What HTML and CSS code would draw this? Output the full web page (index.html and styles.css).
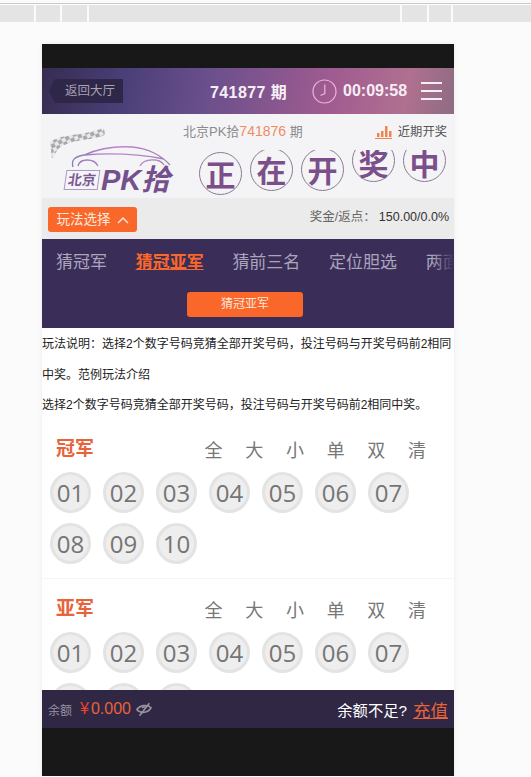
FILE: index.html
```html
<!DOCTYPE html>
<html lang="zh">
<head>
<meta charset="utf-8">
<title>北京PK拾</title>
<link rel="stylesheet" href="styles.css">
</head>
<body>
<div class="ruler">
  <i class="tick t1"></i><i class="tick t2"></i><i class="tick t3"></i><i class="tick t4"></i><i class="tick t5"></i><i class="tick t6"></i>
</div>
<div class="phone">
  <div class="black top"></div>
  <header class="head">
    <div class="back"><span>返回大厅</span></div>
    <div class="issue">741877 期</div>
    <svg class="clock" width="25" height="25" viewBox="0 0 25 25"><circle cx="12.5" cy="12.5" r="11.5" fill="none" stroke="#eeb4dc" stroke-width="1.2"/><path d="M12.8 5.500V14.500L8.500 16.500" fill="none" stroke="#eeb4dc" stroke-width="1.2"/></svg>
    <div class="time">00:09:58</div>
    <div class="menu"><i></i><i></i><i></i></div>
  </header>
  <section class="info">
    <div class="logo">
      <svg class="flag" width="56" height="33" viewBox="0 0 56 33"><defs><pattern id="chk" width="8" height="8" patternUnits="userSpaceOnUse" patternTransform="rotate(-28)"><rect width="8" height="8" fill="#e6e6e6"/><rect width="4" height="4" fill="#9c9c9c"/><rect x="4" y="4" width="4" height="4" fill="#9c9c9c"/></pattern></defs><path d="M0 15C14 6 28 10 54 1L55 8C40 14 20 12 8 22L2 32Z" fill="url(#chk)"/></svg>
      <svg class="car" width="104" height="24" viewBox="0 0 104 24"><defs><linearGradient id="carg" x1="0" x2="1"><stop offset="0" stop-color="#8f78b8"/><stop offset=".5" stop-color="#c084d0"/><stop offset="1" stop-color="#9a82b4"/></linearGradient></defs><path d="M5 21C3 14 6 11 16 9C30 3 48 0 64 1C80 2 94 10 102 19M16 9C40 7 70 8 96 13M10 20C12 12 26 12 30 20M72 20C76 12 92 12 96 19" fill="none" stroke="url(#carg)" stroke-width="1.300"/></svg>
      <div class="brand"><span class="bj">北京</span><span class="pk">PK拾</span></div>
    </div>
    <div class="draw">
      <div class="draw-top">
        <div class="lot">北京PK拾<em>741876</em> 期</div>
        <div class="recent">
          <svg width="17" height="14" viewBox="0 0 17 14"><path d="M2 8h2.500v4H2zM6 6h2.500v6H6zM10 1h2.500v11H10zM14 6h2.500v6H14z" fill="#f0844c"/><path d="M0 13h17v1H0z" fill="#f0844c"/></svg>
          <span>近期开奖</span>
        </div>
      </div>
      <div class="chars">
        <span class="ch">正</span><span class="ch c2">在</span><span class="ch c2">开</span><span class="ch c3">奖</span><span class="ch c3">中</span>
      </div>
    </div>
  </section>
  <section class="playbar">
    <button class="playbtn">玩法选择<svg width="12" height="8" viewBox="0 0 12 8"><path d="M1 7L6 2L11 7" fill="none" stroke="#ffe3d5" stroke-width="1.500"/></svg></button>
    <div class="odds">奖金/返点：<b>150.00/0.0%</b></div>
  </section>
  <nav class="tabs">
    <div class="tabrow">
      <span>猜冠军</span><span class="on">猜冠亚军</span><span>猜前三名</span><span>定位胆选</span><span>两面</span>
    </div>
    <div class="subtab">猜冠亚军</div>
  </nav>
  <main class="content">
    <p class="desc d1">玩法说明：选择2个数字号码竞猜全部开奖号码，投注号码与开奖号码前2相同</p>
    <p class="desc d2">中奖。范例玩法介绍</p>
    <p class="desc d3">选择2个数字号码竞猜全部开奖号码，投注号码与开奖号码前2相同中奖。</p>
    <section class="pick">
      <div class="pick-head"><h3>冠军</h3><div class="opts"><span>全</span><span>大</span><span>小</span><span>单</span><span>双</span><span>清</span></div></div>
      <div class="balls"><span>01</span><span>02</span><span>03</span><span>04</span><span>05</span><span>06</span><span>07</span><span>08</span><span>09</span><span>10</span></div>
    </section>
    <section class="pick second">
      <div class="pick-head"><h3>亚军</h3><div class="opts"><span>全</span><span>大</span><span>小</span><span>单</span><span>双</span><span>清</span></div></div>
      <div class="balls"><span>01</span><span>02</span><span>03</span><span>04</span><span>05</span><span>06</span><span>07</span><span>08</span><span>09</span><span>10</span></div>
    </section>
  </main>
  <footer class="foot">
    <span class="bal">余额</span><span class="money"><i>¥</i>0.000</span>
    <svg class="eye" width="16" height="15" viewBox="0 0 18 16"><path d="M1 8C4 3 13 2 17 6C14 12 5 13 1 8Z" fill="none" stroke="#99939f" stroke-width="1.800"/><path d="M15 1L4 15M7 6.500a3 3 0 0 1 4.500-.500" fill="none" stroke="#99939f" stroke-width="1.800"/></svg>
    <span class="lack">余额不足?</span><a class="charge">充值</a>
  </footer>
  <div class="black bottom"></div>
</div>
</body>
</html>
```
FILE: styles.css
```css
* { box-sizing: border-box; }
html, body { margin: 0; padding: 0; }
body {
  width: 531px; height: 777px; overflow: hidden; background: #fbfbfb;
  font-family: "Liberation Sans", "Noto Sans CJK TC", sans-serif;
}
.ruler {
  position: relative; height: 19px;
  border-top: 1px solid #c9c9c9; margin-top: 3px; margin-bottom: 22px;
  background: linear-gradient(#fff 0 1px, #e4e4e4 1px);
}
.tick { position: absolute; top: 1px; bottom: 0; width: 2px; background: #fafafa; }
.t1 { left: 34px; } .t2 { left: 60px; } .t3 { left: 87px; }
.t4 { left: 400px; } .t5 { left: 427px; } .t6 { left: 451px; }

.phone { width: 412px; height: 733px; margin-left: 42px; background: #fff; box-shadow: 0 0 4px rgba(0,0,0,.08); }
.black { background: #181818; }
.black.top { height: 24px; }
.black.bottom { height: 48px; }

.head {
  height: 46px; display: flex; align-items: center; color: #fff;
  background: linear-gradient(100deg, #372c50 0%, #4a3f78 20%, #6a4f8c 40%, #a05c90 70%, #b07090 88%, #8d6c80 100%);
}
.back {
  width: 74px; height: 24px; margin-left: 7px; background: #2f2748; flex: none;
  clip-path: polygon(6px 0, 100% 0, 100% 100%, 6px 100%, 0 50%);
  color: #a8a3b6; font-size: 12.500px; line-height: 24px; padding-left: 16px; white-space: nowrap;
}
.issue { margin-left: 87px; font-size: 16px; font-weight: 700; letter-spacing: .4px; width: 102px; flex: none; color: #f6eef6; white-space: nowrap; }
.clock { display: block; flex: none; }
.time { margin-left: 6px; font-size: 16px; font-weight: 700; color: #f6eef6; }
.menu { margin-left: 14px; width: 21px; display: flex; flex-direction: column; gap: 6px; flex: none; }
.menu i { display: block; height: 2px; background: #f7edf5; }

.info { height: 84px; background: #f4f4f6; display: flex; }
.logo { width: 139px; position: relative; flex: none; }
.flag { position: absolute; left: 8px; top: 13px; opacity: .85; }
.car { position: absolute; left: 26px; top: 32px; }
.brand { position: absolute; left: 23px; top: 51px; display: flex; align-items: center; gap: 2px; white-space: nowrap; }
.bj { font-size: 14px; font-weight: 700; color: #7b5b93; border: 1px solid #a99bc0; padding: 1px 2px; line-height: 16px; background: #f7f4f9; transform: skewX(-8deg); }
.pk { font-size: 29px; line-height: 30px; font-weight: 700; font-style: italic; color: #74508c; }

.draw { flex: 1; display: flex; flex-direction: column; min-width: 0; }
.draw-top { display: flex; justify-content: space-between; height: 36px; padding: 9px 7px 0 2px; }
.lot { font-size: 13px; line-height: 17px; color: #8b8b8b; white-space: nowrap; }
.lot em { font-style: normal; color: #ef8a64; font-size: 14px; }
.recent { display: flex; gap: 6px; align-items: flex-start; font-size: 12.300px; line-height: 19px; color: #555; white-space: nowrap; }
.recent svg { margin-top: 2px; }
.chars { display: flex; gap: 8px; padding-left: 18px; height: 48px; overflow: hidden; align-items: flex-start; }
.ch {
  width: 43px; height: 43px; border: 1px solid #8b7a96; border-radius: 50%; flex: none;
  font-size: 30px; line-height: 40px; text-align: center; font-weight: 700; color: #7b4f8a;
  font-family: "Noto Sans CJK SC", sans-serif; margin-top: 2px;
}
.ch.c2 { margin-top: -2px; }
.ch.c3 { margin-top: -11px; line-height: 44px; }

.playbar { height: 41px; background: #ebebeb; display: flex; align-items: flex-start; justify-content: space-between; padding: 9px 5px 0 6px; }
.playbtn {
  width: 89px; height: 25px; border: 0; border-radius: 3px; background: #f9672a; color: #ffe9df;
  font: 13.500px/25px "Liberation Sans", "Noto Sans CJK SC", sans-serif; padding: 0;
  display: flex; align-items: center; justify-content: center; gap: 6px;
}
.odds { font-size: 12.500px; color: #666; line-height: 20px; white-space: nowrap; }
.odds b { font-weight: 400; color: #333; margin-left: 3px; }

.tabs { height: 89px; background: #3a2d57; overflow: hidden; }
.tabrow { position: relative; display: flex; gap: 28.700px; padding: 9px 0 0 14px; white-space: nowrap; font-size: 17px; line-height: 30px; color: #aaa4bd; height: 53px; width: 412px; overflow: hidden; }
.tabrow::after { content: ""; position: absolute; right: 0; top: 0; bottom: 0; width: 22px; background: linear-gradient(90deg, rgba(58,45,87,0), #3a2d57); }
.tabrow .on { color: #f9672a; font-weight: 700; text-decoration: underline; height: 28px; }
.subtab { width: 116px; height: 25px; margin-left: 145px; background: #f9672a; border-radius: 3px; color: #ffe6da; text-align: center; font-size: 12px; line-height: 25px; }

.content { height: 362px; overflow: hidden; background: #fff; }
.desc { margin: 0; font-size: 12px; line-height: 16px; color: #222; white-space: nowrap; }
.d1 { padding-top: 8px; }
.d2 { margin-top: 15px; }
.d3 { margin-top: 14px; }

.pick { padding: 0 8px 14px; border-bottom: 1px solid #f4f4f4; }
.pick-head { display: flex; align-items: center; justify-content: space-between; height: 32px; margin-top: 20px; }
.second .pick-head { margin-top: 14px; }
.pick h3 { margin: 0; padding-left: 6px; font-size: 19px; line-height: 28px; color: #e8623a; font-weight: 700; }
.opts { display: flex; gap: 22.700px; padding-right: 20px; font-size: 18px; color: #777; }
.balls { display: flex; flex-wrap: wrap; gap: 10px 12px; margin-top: 7px; width: 370px; }
.balls span {
  width: 41px; height: 41px; border-radius: 50%; background: #eee; border: 3px solid #e3e3e3;
  font-size: 24px; line-height: 35px; text-align: center; color: #757575; font-family: "Open Sans", sans-serif;
}
.second { border: 0; }

.foot { height: 38px; background: #2f2744; display: flex; align-items: center; padding: 0 6px; white-space: nowrap; }
.bal { font-size: 12px; color: #98929f; }
.money { font-size: 16px; color: #e8623a; margin-left: 8px; }
.money i { font-style: normal; color: #f2432a; margin-right: 2px; }
.eye { margin-left: 5px; }
.lack { margin-left: auto; font-size: 15.300px; color: #fff; }
.charge { margin-left: 6px; font-size: 17.500px; color: #e8623a; text-decoration: underline; }
```
